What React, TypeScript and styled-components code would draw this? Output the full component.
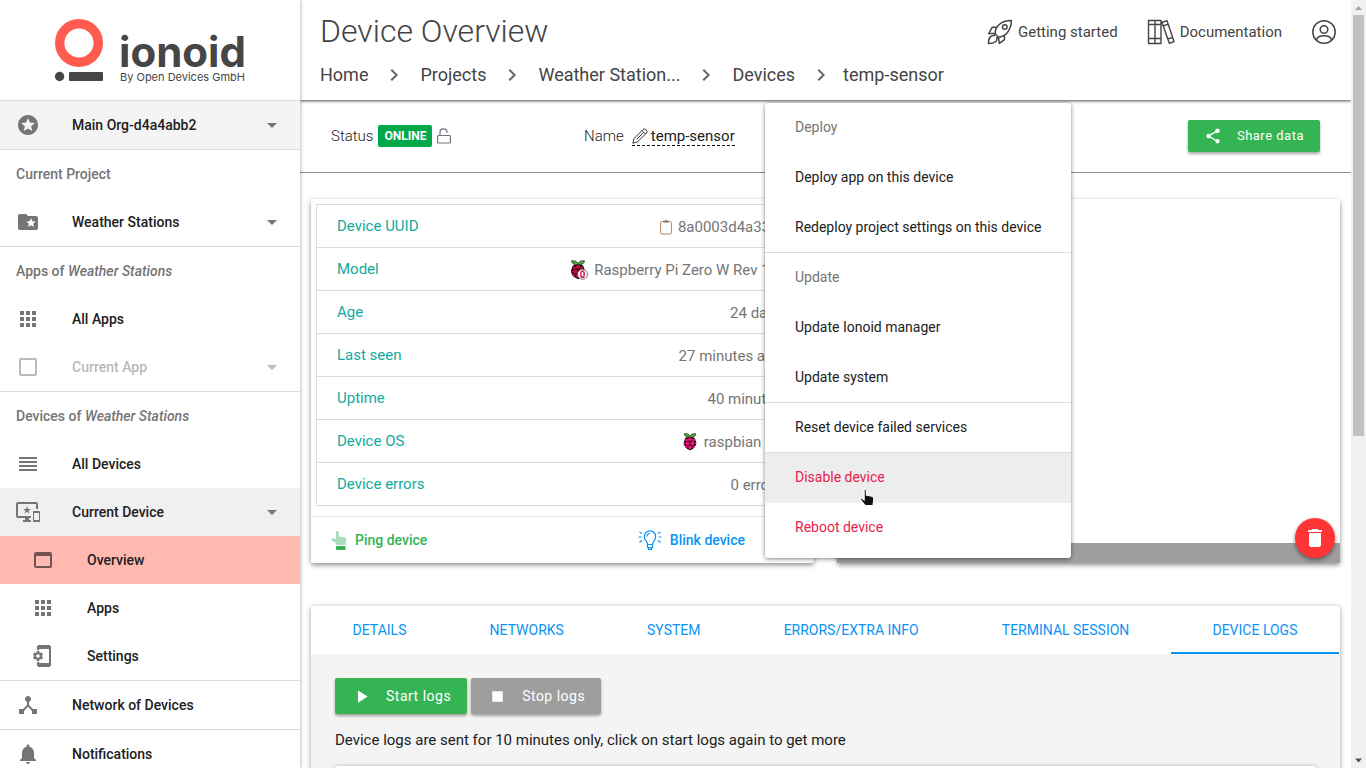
import React from "react";
import styled, { createGlobalStyle, css } from "styled-components";
import {
  MdStars, MdArrowDropDown, MdApps, MdCheckBoxOutlineBlank, MdReorder, MdImportantDevices,
  MdWebAsset, MdPhonelinkSetup, MdDeviceHub, MdNotifications, MdShare, MdPlayArrow, MdStop,
  MdDelete, MdChevronRight,
} from "react-icons/md";

const Global = createGlobalStyle`
  * { box-sizing: border-box; }
  html, body { margin: 0; height: 100%; overflow: hidden; }
  body { font: 400 15px/22px Roboto, "Liberation Sans", sans-serif; color: #212121; background: #fff; }
  button { font: inherit; border: 0; margin: 0; background: none; cursor: pointer; }
  a { color: inherit; text-decoration: none; }
  ul, ol { list-style: none; margin: 0; padding: 0; }
  svg { display: block; flex: none; }
`;

const Shell = styled.div`
  display: flex;
  height: 100vh;
  overflow: hidden;
`;

const Sidebar = styled.aside`
  flex: 0 0 300px;
  background: #fff;
  box-shadow: 0 0 4px rgba(0, 0, 0, 0.4);
  z-index: 3;
`;

const LogoLink = styled.a`
  display: block;
  height: 100px;
`;

const Group = styled.div`
  border-top: 1px solid #dcdcdc;
`;

const GroupTitle = styled.h2`
  margin: 0;
  padding: 0 16px;
  font-size: 14px;
  font-weight: 500;
  line-height: 48px;
  color: #757575;
`;

const navTone = {
  plain: "#fff",
  grey: "#f4f4f4",
  open: "#f0f0f0",
  active: "#ffb9b1",
};

const NavLink = styled.a<{ $tone?: keyof typeof navTone; $sub?: boolean; $muted?: boolean }>`
  display: flex;
  align-items: center;
  height: 48px;
  padding: 0 16px 0 ${(p) => (p.$sub ? 31 : 16)}px;
  font-size: 14px;
  font-weight: 500;
  background: ${(p) => navTone[p.$tone ?? "plain"]};
  color: ${(p) => (p.$muted ? "#b9b9b9" : "#212121")};
  > svg { color: ${(p) => (p.$muted ? "#b9b9b9" : p.$tone === "active" ? "#735350" : "#757575")}; }
`;

const NavText = styled.span`
  flex: 1;
  margin-left: 32px;
`;

const Main = styled.div`
  flex: 1;
  min-width: 0;
  display: flex;
  flex-direction: column;
`;

const Header = styled.header`
  flex: 0 0 100px;
  display: flex;
  justify-content: space-between;
  padding: 10px 14px 0 20px;
  color: #444;
  box-shadow: 0 1px 3px rgba(0, 0, 0, 0.7);
  z-index: 2;
`;

const Title = styled.h1`
  margin: 0;
  font-size: 32px;
  line-height: 42px;
  font-weight: 300;
`;

const Crumbs = styled.ol`
  display: flex;
  align-items: center;
  margin-top: 11px;
  font-size: 18px;
  white-space: nowrap;
  li { display: flex; align-items: center; }
  li > svg { margin: 0 10px 0 14px; color: #666; }
  li + li > a { padding-left: 4px; }
`;

const HeaderLinks = styled.nav`
  display: flex;
  align-items: center;
  gap: 29px;
  height: 44px;
`;

const HeaderLink = styled.a`
  display: flex;
  align-items: center;
  gap: 5px;
`;

const StatusBar = styled.section`
  flex: 0 0 73px;
  display: flex;
  align-items: center;
  position: relative;
  padding: 0 31px;
  border-bottom: 1px solid #8f8f8f;
`;

const StatusCell = styled.div<{ $width: number }>`
  flex: 0 0 ${(p) => p.$width}px;
  display: flex;
  align-items: center;
  gap: 5px;
  font-weight: 300;
`;

const Badge = styled.span`
  padding: 0 6px;
  border-radius: 2px;
  background: #00a84c;
  color: #fff;
  font-size: 12px;
  font-weight: 700;
`;

const NameLink = styled.a`
  display: flex;
  align-items: center;
  gap: 3px;
  height: 20px;
  margin-left: 3px;
  border-bottom: 1px dashed #000;
  font-weight: 400;
`;

const buttonTone = { green: "#35b454", grey: "#9e9e9e" };

const RaisedButton = styled.button<{ $tone: keyof typeof buttonTone; $tall?: boolean }>`
  display: flex;
  align-items: center;
  gap: ${(p) => (p.$tall ? 14 : 15)}px;
  height: ${(p) => (p.$tall ? 36 : 32)}px;
  padding: 0 16px;
  border-radius: 2px;
  background: ${(p) => buttonTone[p.$tone]};
  color: #fff;
  font-size: ${(p) => (p.$tall ? 14 : 13)}px;
  letter-spacing: 0.5px;
  box-shadow: 0 2px 3px rgba(0, 0, 0, 0.35);
`;

const ShareSlot = styled.div`
  margin-left: auto;
`;

const Menu = styled.ul`
  position: absolute;
  top: 3px;
  left: 465px;
  width: 306px;
  padding-bottom: 5px;
  background: #fff;
  border-radius: 3px;
  box-shadow: 0 1px 4px rgba(0, 0, 0, 0.5);
  z-index: 4;
  font-size: 14px;
`;

const MenuItem = styled.li<{ $line?: boolean }>`
  ${(p) => p.$line && css`box-shadow: 0 -1px 0 #dcdcdc;`}
`;

const menuText = css`
  display: block;
  width: 100%;
  height: 50px;
  padding: 0 30px 2px;
  line-height: 48px;
  text-align: left;
  white-space: nowrap;
`;

const MenuHeading = styled.span`
  ${menuText}
  color: #757575;
`;

const MenuButton = styled.button<{ $danger?: boolean; $hover?: boolean }>`
  ${menuText}
  color: ${(p) => (p.$danger ? "#e5224c" : "#212121")};
  ${(p) => p.$hover && css`background: #ededed;`}
`;

const Pointer = styled.svg`
  position: absolute;
  top: 385px;
  left: 94px;
`;

const Content = styled.main`
  padding: 26px 11px 0;
`;

const Columns = styled.div`
  display: grid;
  grid-template-columns: 503px 1fr;
  gap: 23px;
`;

const cardShadow = css`
  background: #fff;
  border-radius: 2px;
  box-shadow: 0 1px 5px rgba(0, 0, 0, 0.4);
`;

const Card = styled.section`
  ${cardShadow}
  display: flex;
  flex-direction: column;
  position: relative;
  box-shadow: 0 2px 5px rgba(0, 0, 0, 0.45);
`;

const Facts = styled.table`
  width: calc(100% - 10px);
  margin: 5px 5px 10px;
  border: 1px solid #dcdcdc;
  border-collapse: collapse;
  th, td { height: 43px; padding: 0 20px; border-bottom: 1px solid #dcdcdc; }
  th { text-align: left; font-weight: 400; color: #10ab9d; }
  td { padding: 2px 26px 0 0; color: #757575; white-space: nowrap; }
`;

const FactValue = styled.span`
  display: flex;
  align-items: center;
  justify-content: flex-end;
  gap: 6px;
`;

const CardActions = styled.div`
  display: flex;
  justify-content: space-between;
  height: 47px;
  padding: 0 69px 0 20px;
  border-top: 1px solid #e6e6e6;
`;

const CardAction = styled.button<{ $blue?: boolean }>`
  display: flex;
  align-items: center;
  gap: 8px;
  padding: 0;
  font-size: 14px;
  font-weight: 500;
  color: ${(p) => (p.$blue ? "#0a93f4" : "#35b454")};
`;

const MapFooter = styled.footer`
  margin-top: auto;
  height: 20px;
  background: #9e9e9e;
`;

const DeleteButton = styled.button`
  position: absolute;
  right: 5px;
  bottom: 5px;
  display: grid;
  place-items: center;
  width: 40px;
  height: 40px;
  padding: 0;
  border-radius: 50%;
  background: #ff3535;
  color: #fff;
  box-shadow: 0 2px 4px rgba(0, 0, 0, 0.45);
`;

const LogsCard = styled.section`
  ${cardShadow}
  margin-top: 43px;
`;

const Tabs = styled.div`
  display: flex;
  height: 48px;
  padding-right: 1px;
`;

const Tab = styled.button<{ $active?: boolean }>`
  flex: 1 1 auto;
  padding: 2px 41px 0;
  font-size: 14px;
  color: #0a93f4;
  white-space: nowrap;
  border-bottom: 2px solid ${(p) => (p.$active ? "#0a93f4" : "transparent")};
`;

const LogsBody = styled.div`
  padding: 24px;
  background: #f4f4f4;
`;

const ButtonRow = styled.div`
  display: flex;
  gap: 4px;
`;

const Hint = styled.p`
  margin: 15px 0;
`;

const LogOutput = styled.div`
  ${cardShadow}
  height: 300px;
`;

const ScrollTrack = styled.div`
  flex: 0 0 15px;
  display: flex;
  flex-direction: column;
  align-items: center;
  background: #f1f1f1;
  color: #a3a3a3;
  z-index: 4;
`;

const ScrollRail = styled.div`
  flex: 1;
`;

const ScrollThumb = styled.div`
  width: 11px;
  height: 57%;
  background: #c1c1c1;
`;

const Logo = () => (
  <svg width="300" height="100" viewBox="0 0 300 100" role="img" aria-label="ionoid by Open Devices GmbH">
    <circle cx="79" cy="43" r="19.3" fill="none" stroke="#ff5c4f" strokeWidth="9.4" />
    <circle cx="59.6" cy="76.5" r="4.7" fill="#464646" />
    <rect x="69" y="72" width="34" height="9" rx="1" fill="#464646" />
    <text x="119" y="67" fontFamily="Inter, sans-serif" fontWeight="700" fontSize="42" fill="#464646">ionoid</text>
    <text x="120" y="81" fontFamily="Inter, sans-serif" fontSize="11" fill="#464646">By Open Devices GmbH</text>
  </svg>
);

const FolderStar = () => (
  <svg width="24" height="24" viewBox="0 0 24 24" fill="currentColor" aria-hidden="true">
    <path d="M20 6h-8l-2-2H4c-1.100 0-1.990.9-1.990 2L2 18c0 1.100.9 2 2 2h16c1.100 0 2-.9 2-2V8c0-1.100-.9-2-2-2zm-2.060 11L15 15.280 12.060 17l.78-3.330-2.590-2.240 3.410-.29L15 8l1.340 3.140 3.410.29-2.590 2.240.78 3.330z" />
  </svg>
);

const Rocket = () => (
  <svg width="26" height="26" viewBox="0 0 26 26" fill="none" stroke="currentColor" strokeWidth="1.500" strokeLinejoin="round" aria-hidden="true">
    <path d="M8.200 15C7.800 7.500 14 1.600 24.300 1.600 24.500 11 18.500 17.500 11.500 18.300zM10.300 8.200H5.300L1.700 14.500H8.200M17.500 15.800V20.700L12.300 24.300 11.500 18.300M8 16.500C4 16 1.500 18 1.500 24.500 8 24.500 10.700 22 9.800 18" />
    <circle cx="17.800" cy="8" r="2.300" />
  </svg>
);

const Books = () => (
  <svg width="28" height="26" viewBox="0 0 28 26" fill="none" stroke="currentColor" strokeWidth="1.400" strokeLinejoin="round" aria-hidden="true">
    <path d="M1.500 1.500H8V24.500H1.500zM8 1.500H14V24.500H8zM1.500 5.500H14M1.500 19.500H14M15 3.500 20 1.700 27 22.500 22.300 24.300zM16.300 7 21.200 5.200M20.800 20 25.700 18.300" />
  </svg>
);

const Account = () => (
  <svg width="26" height="26" viewBox="0 0 26 26" fill="none" stroke="currentColor" strokeWidth="1.500" aria-hidden="true">
    <circle cx="13" cy="13" r="11.200" />
    <circle cx="13" cy="10.500" r="3.800" />
    <path d="M5.500 21C6 17.500 8.500 16.800 13 16.800S20 17.500 20.500 21" />
  </svg>
);

const Lock = () => (
  <svg width="14" height="16" viewBox="0 0 14 16" fill="none" stroke="#6c757d" strokeWidth="1.200" aria-hidden="true">
    <rect x=".6" y="7.500" width="12.800" height="7.500" rx="1" />
    <path d="M3 7.500V4.300A3.500 3.500 0 0 1 10 4.300V5" />
  </svg>
);

const Pencil = () => (
  <svg width="16" height="16" viewBox="0 0 16 16" fill="none" stroke="#333" strokeLinejoin="round" aria-hidden="true">
    <path d="M.8 15.200 2 10.500 11 1.500Q12.500.2 14.200 1.800T14.500 5L5.500 14zM10 2.500 13.500 6M4.500 11.500 11.500 4.500" />
  </svg>
);

const Clipboard = () => (
  <svg width="12" height="16" viewBox="0 0 12 16" fill="none" aria-hidden="true">
    <rect x=".6" y="2.500" width="10.800" height="12.500" rx="1" stroke="#b88a60" />
    <path d="M3.500 3.500V1.800H5Q6-.2 7 1.800H8.500V3.500z" fill="#777" />
  </svg>
);

const Raspberry = ({ size, zero }: { size: number; zero?: boolean }) => (
  <svg width={size} height={zero ? 20 : 18} viewBox={zero ? "0 0 18 20" : "0 0 16 20"} aria-hidden="true">
    <path d="M8 5Q2 5 1.500.8 6 0 8 3.200 10 0 14.500.8 14 5 8 5z" fill="#4fa83d" stroke="#18220f" strokeWidth=".7" />
    <path d="M8 4.500Q14 4 14 8 16 11 14 14.500 12 18 8 19.200 4 18 2 14.500 0 11 2 8 2 4 8 4.500z" fill="#1d0712" />
    <g fill={zero ? "#c00f40" : "#ef1275"}>
      <circle cx="8" cy="7" r="2.100" /><circle cx="4.300" cy="7.800" r="1.500" /><circle cx="11.700" cy="7.800" r="1.500" />
      <circle cx="5.300" cy="11.500" r="2.300" /><circle cx="10.700" cy="11.500" r="2.300" /><circle cx="8" cy="15.800" r="2.100" />
      <circle cx="2.100" cy="11.500" r="1" /><circle cx="13.900" cy="11.500" r="1" /><circle cx="4" cy="15.200" r="1.400" /><circle cx="12" cy="15.200" r="1.400" />
    </g>
    {zero && (
      <>
        <circle cx="12.500" cy="14.200" r="5" fill="#fff" stroke="#555" strokeWidth=".8" />
        <ellipse cx="12.500" cy="14.200" rx="1.700" ry="3.200" fill="none" stroke="#e0245f" strokeWidth="1.600" />
      </>
    )}
  </svg>
);

const PingHand = () => (
  <svg width="16" height="20" viewBox="0 0 16 20" aria-hidden="true">
    <path d="M5 1.500Q6.500.3 7.800 1.800V6.500L14 7.500Q15.500 8 15.200 10L14.500 15H5.500L4 12 .5 10.500Q0 8.500 2 8.300L5 9z" fill="#a9ddb7" />
    <rect x="5" y="16" width="9.500" height="4" rx=".8" fill="#35b454" />
  </svg>
);

const Bulb = () => (
  <svg width="24" height="20" viewBox="0 0 24 20" fill="none" stroke="currentColor" strokeWidth="1.200" aria-hidden="true">
    <path d="M9.500 14.500C9.500 11.500 6.300 10.500 6.300 6.500A5.700 5.700 0 0 1 17.700 6.500C17.700 10.500 14.500 11.500 14.500 14.500zM9.500 14.500V17.500H14.500V14.500M10.500 17.500V19.400H13.500V17.500M9 6.500A3 3 0 0 1 12 3.500M4 3.500 1.500 2M3.500 7H.5M4 10.500 1.500 12.500M20 3.500 22.500 2M20.500 7H23.500M20 10.500 22.500 12.500" />
  </svg>
);

const Nav = ({ icon, children, caret, ...rest }: {
  icon: React.ReactNode; children: React.ReactNode; caret?: boolean;
  $tone?: keyof typeof navTone; $sub?: boolean; $muted?: boolean;
}) => (
  <NavLink href="#" {...rest}>
    {icon}
    <NavText>{children}</NavText>
    {caret && <MdArrowDropDown size={24} />}
  </NavLink>
);

const crumbs = ["Home", "Projects", "Weather Station...", "Devices"];

const facts: { label: string; value: string; icon?: React.ReactNode }[] = [
  { label: "Device UUID", value: "8a0003d4a33...", icon: <Clipboard /> },
  { label: "Model", value: "Raspberry Pi Zero W Rev 1.1", icon: <Raspberry size={18} zero /> },
  { label: "Age", value: "24 days" },
  { label: "Last seen", value: "27 minutes ago" },
  { label: "Uptime", value: "40 minutes" },
  { label: "Device OS", value: "raspbian 10", icon: <Raspberry size={16} /> },
  { label: "Device errors", value: "0 errors" },
];

const tabs = ["DETAILS", "NETWORKS", "SYSTEM", "ERRORS/EXTRA INFO", "TERMINAL SESSION", "DEVICE LOGS"];

export default function App() {
  return (
    <>
      <Global />
      <Shell>
        <Sidebar>
          <LogoLink href="#"><Logo /></LogoLink>
          <Group><Nav $tone="grey" caret icon={<MdStars size={24} />}>Main Org-d4a4abb2</Nav></Group>
          <Group>
            <GroupTitle>Current Project</GroupTitle>
            <Nav caret icon={<FolderStar />}>Weather Stations</Nav>
          </Group>
          <Group>
            <GroupTitle>Apps of <em>Weather Stations</em></GroupTitle>
            <Nav icon={<MdApps size={24} />}>All Apps</Nav>
            <Nav $muted caret icon={<MdCheckBoxOutlineBlank size={24} />}>Current App</Nav>
          </Group>
          <Group>
            <GroupTitle>Devices of <em>Weather Stations</em></GroupTitle>
            <Nav icon={<MdReorder size={24} />}>All Devices</Nav>
            <Nav $tone="open" caret icon={<MdImportantDevices size={24} />}>Current Device</Nav>
            <Nav $tone="active" $sub icon={<MdWebAsset size={24} />}>Overview</Nav>
            <Nav $sub icon={<MdApps size={24} />}>Apps</Nav>
            <Nav $sub icon={<MdPhonelinkSetup size={24} />}>Settings</Nav>
          </Group>
          <Group><Nav icon={<MdDeviceHub size={24} />}>Network of Devices</Nav></Group>
          <Group><Nav icon={<MdNotifications size={24} />}>Notifications</Nav></Group>
        </Sidebar>

        <Main>
          <Header>
            <div>
              <Title>Device Overview</Title>
              <Crumbs>
                {crumbs.map((c, i) => (
                  <li key={c}>
                    {i > 0 && <MdChevronRight size={24} />}
                    <a href="#">{c}</a>
                  </li>
                ))}
                <li aria-current="page"><MdChevronRight size={24} />temp-sensor</li>
              </Crumbs>
            </div>
            <HeaderLinks>
              <HeaderLink href="#"><Rocket />Getting started</HeaderLink>
              <HeaderLink href="#"><Books />Documentation</HeaderLink>
              <HeaderLink href="#" aria-label="Account"><Account /></HeaderLink>
            </HeaderLinks>
          </Header>

          <StatusBar>
            <StatusCell $width={253}>Status <Badge>ONLINE</Badge> <Lock /></StatusCell>
            <StatusCell $width={200}>Name <NameLink href="#"><Pencil />temp-sensor</NameLink></StatusCell>
            <ShareSlot>
              <RaisedButton $tone="green"><MdShare size={18} />Share data</RaisedButton>
            </ShareSlot>
            <Menu>
              <MenuItem><MenuHeading>Deploy</MenuHeading></MenuItem>
              <MenuItem><MenuButton>Deploy app on this device</MenuButton></MenuItem>
              <MenuItem><MenuButton>Redeploy project settings on this device</MenuButton></MenuItem>
              <MenuItem $line><MenuHeading>Update</MenuHeading></MenuItem>
              <MenuItem><MenuButton>Update Ionoid manager</MenuButton></MenuItem>
              <MenuItem><MenuButton>Update system</MenuButton></MenuItem>
              <MenuItem $line><MenuButton>Reset device failed services</MenuButton></MenuItem>
              <MenuItem $line><MenuButton $danger $hover>Disable device</MenuButton></MenuItem>
              <MenuItem><MenuButton $danger>Reboot device</MenuButton></MenuItem>
              <Pointer width="18" height="22" viewBox="0 0 16 20" aria-hidden="true">
                <path d="M4.500 1.500Q5.500.5 6.500 1.500V6.500L11.500 7.500Q13.500 8 13.300 10L12.500 16H5.500L1 10.500Q.8 9 2.500 9.300L4.500 11z" fill="#111" stroke="#fff" />
              </Pointer>
            </Menu>
          </StatusBar>

          <Content>
            <Columns>
              <Card>
                <Facts>
                  <tbody>
                    {facts.map((f) => (
                      <tr key={f.label}>
                        <th scope="row">{f.label}</th>
                        <td><FactValue>{f.icon}{f.value}</FactValue></td>
                      </tr>
                    ))}
                  </tbody>
                </Facts>
                <CardActions>
                  <CardAction><PingHand />Ping device</CardAction>
                  <CardAction $blue><Bulb />Blink device</CardAction>
                </CardActions>
              </Card>
              <Card>
                <MapFooter />
                <DeleteButton aria-label="Delete device"><MdDelete size={24} /></DeleteButton>
              </Card>
            </Columns>

            <LogsCard>
              <Tabs role="tablist">
                {tabs.map((t) => (
                  <Tab key={t} role="tab" aria-selected={t === "DEVICE LOGS"} $active={t === "DEVICE LOGS"}>{t}</Tab>
                ))}
              </Tabs>
              <LogsBody>
                <ButtonRow>
                  <RaisedButton $tone="green" $tall><MdPlayArrow size={21} />Start logs</RaisedButton>
                  <RaisedButton $tone="grey" $tall><MdStop size={21} />Stop logs</RaisedButton>
                </ButtonRow>
                <Hint>Device logs are sent for 10 minutes only, click on start logs again to get more</Hint>
                <LogOutput />
              </LogsBody>
            </LogsCard>
          </Content>
        </Main>

        <ScrollTrack aria-hidden="true">
          <svg width="15" height="15" viewBox="0 0 15 15"><path d="M4 10 7.500 6 11 10z" fill="currentColor" /></svg>
          <ScrollRail><ScrollThumb /></ScrollRail>
          <svg width="15" height="15" viewBox="0 0 15 15"><path d="M4 5.500 7.500 9.500 11 5.500z" fill="#505050" /></svg>
        </ScrollTrack>
      </Shell>
    </>
  );
}
